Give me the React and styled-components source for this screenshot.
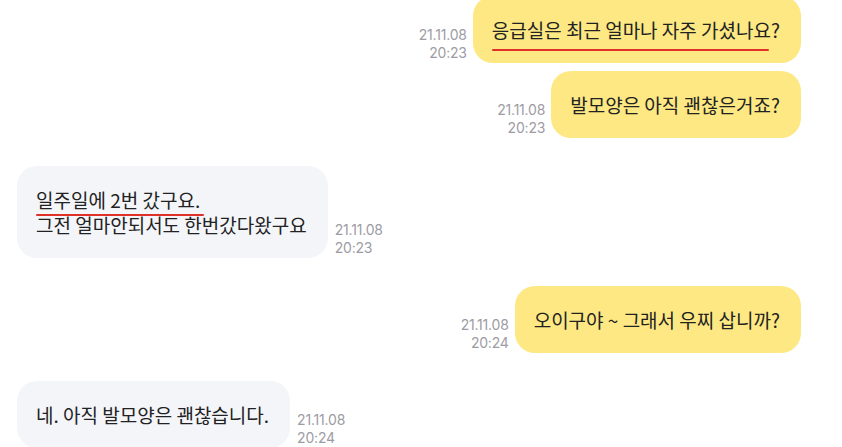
import React from 'react';
import styled, { createGlobalStyle } from 'styled-components';

const messages = [
  {
    id: 1,
    mine: true,
    date: '21.11.08',
    time: '20:23',
    lines: [[{ text: '응급실은 최근 얼마나 자주 가셨나요?', mark: { left: 0, right: 11, drop: 8 } }]],
  },
  { id: 2, mine: true, date: '21.11.08', time: '20:23', lines: [[{ text: '발모양은 아직 괜찮은거죠?' }]] },
  {
    id: 3,
    mine: false,
    date: '21.11.08',
    time: '20:23',
    lines: [
      [{ text: '일주일에 2번 갔구요.', mark: { left: 0, right: -4, drop: 3 } }],
      [{ text: '그전 얼마안되서도 한번갔다왔구요' }],
    ],
  },
  { id: 4, mine: true, date: '21.11.08', time: '20:24', lines: [[{ text: '오이구야 ~ 그래서 우찌 삽니까?' }]] },
  { id: 5, mine: false, date: '21.11.08', time: '20:24', lines: [[{ text: '네. 아직 발모양은 괜찮습니다.' }]] },
];

export default function App() {
  return (
    <>
      <GlobalStyle />
      <ChatList>
        {messages.map((msg, i) => (
          <Row key={msg.id} $mine={msg.mine} $gap={i === 0 ? 0 : messages[i - 1].mine === msg.mine ? 8 : 28}>
            <Bubble $mine={msg.mine}>
              {msg.lines.map((line, li) => (
                <Line key={li}>
                  {line.map((part, pi) =>
                    part.mark ? (
                      <Marked key={pi} $left={part.mark.left} $right={part.mark.right} $drop={part.mark.drop}>
                        {part.text}
                      </Marked>
                    ) : (
                      <span key={pi}>{part.text}</span>
                    )
                  )}
                </Line>
              ))}
            </Bubble>
            <Stamp $mine={msg.mine}>
              <span>{msg.date}</span>
              <span>{msg.time}</span>
            </Stamp>
          </Row>
        ))}
      </ChatList>
    </>
  );
}

const GlobalStyle = createGlobalStyle`
  html, body {
    margin: 0;
    padding: 0;
    background: #ffffff;
  }
  body {
    font-family: "Noto Sans CJK KR", "Noto Sans", sans-serif;
    color: #222222;
  }
`;

const ChatList = styled.div`
  display: flex;
  flex-direction: column;
  padding: 0 41px 0 17px;
  margin-top: -4px;
  height: 451px;
  overflow: hidden;
`;

const Row = styled.div`
  display: flex;
  flex-direction: ${(p) => (p.$mine ? 'row-reverse' : 'row')};
  align-items: flex-end;
  gap: ${(p) => (p.$mine ? 6 : 7)}px;
  margin-top: ${(p) => p.$gap}px;
`;

const Bubble = styled.div`
  background: ${(p) => (p.$mine ? '#fde883' : '#f4f5f9')};
  border-radius: 20px;
  padding: 21px 21px 21px 19px;
  font-size: 19px;
  line-height: 25px;
  color: #222222;
  white-space: nowrap;
`;

const Line = styled.div``;

const Marked = styled.span`
  position: relative;

  &::after {
    content: '';
    position: absolute;
    left: ${(p) => p.$left}px;
    right: ${(p) => p.$right}px;
    bottom: -${(p) => p.$drop}px;
    height: 2.5px;
    background: #e0302a;
    border-radius: 1px;
  }
`;

const Stamp = styled.div`
  display: flex;
  flex-direction: column;
  align-items: ${(p) => (p.$mine ? 'flex-end' : 'flex-start')};
  font-family: Inter, "Noto Sans", sans-serif;
  font-size: 14px;
  line-height: 18px;
  letter-spacing: -0.2px;
  color: #9d9ca4;
  padding-bottom: 1px;
`;
